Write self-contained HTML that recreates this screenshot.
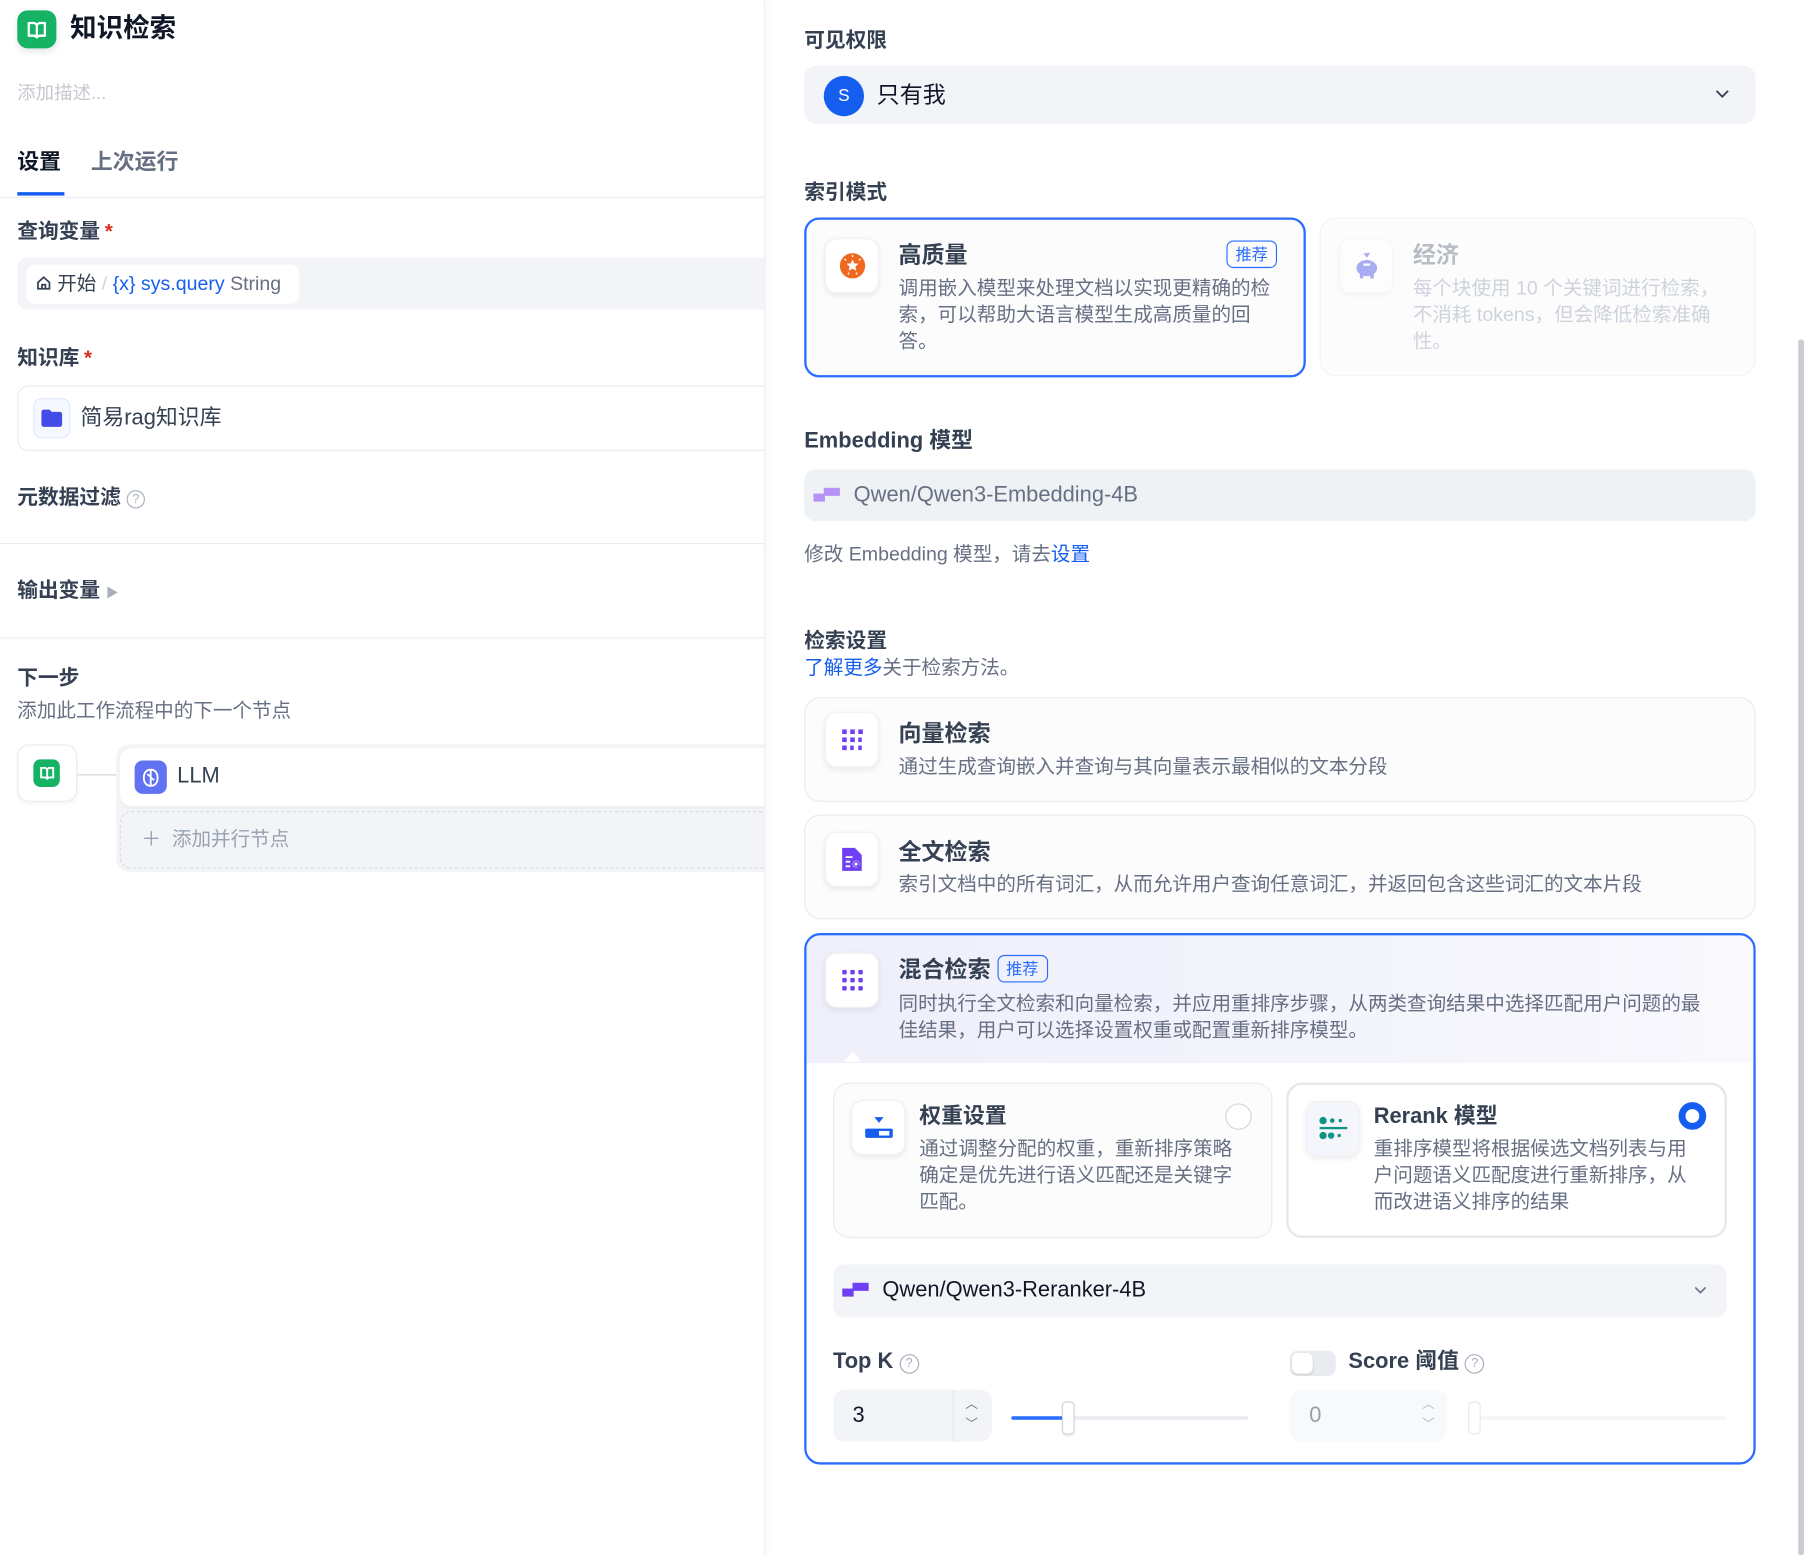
<!DOCTYPE html>
<html><head><meta charset="utf-8">
<style>
*{box-sizing:border-box;margin:0;padding:0}
html,body{width:1804px;height:1555px;overflow:hidden;background:#fff}
body{font-family:"Liberation Sans","Noto Sans CJK SC",sans-serif;color:#354052}
#w{position:absolute;left:0;top:0;width:1568px;height:1352px;transform:scale(1.1505);transform-origin:0 0}
.a{position:absolute;white-space:nowrap}
.b{font-weight:700}
.lbl{font-size:18px;font-weight:700;color:#354052;line-height:24px}
.star{color:#d92d20;margin-left:4px}
.gray{color:#676f83}
.ic{position:absolute;width:47px;height:48px;background:#fff;border-radius:10px;box-shadow:0 2px 5px rgba(16,24,40,.08);border:1px solid #f0f1f4;display:flex;align-items:center;justify-content:center}
.card{position:absolute;background:#fcfcfd;border:1px solid #e8eaef;border-radius:14px}
.ttl{font-size:20px;font-weight:700;color:#354052;line-height:26px}
.desc{font-size:17px;color:#676f83;line-height:23px;white-space:normal}
.badge{display:inline-block;border:1px solid #296dff;color:#296dff;border-radius:6px;font-size:14px;line-height:22px;padding:0 7px;font-weight:400}
.q{display:inline-block;width:16px;height:16px;border:1.3px solid #a8afbd;border-radius:50%;font-size:11px;color:#a8afbd;text-align:center;line-height:14px;font-weight:400;vertical-align:1px}
</style></head><body><div id="w">
<!-- left panel -->
<div class="a" style="left:0;top:0;width:665px;height:1352px;border-right:1px solid #eceef2;box-shadow:2px 0 6px rgba(0,0,0,.03)"></div>
<div class="a" style="left:0;top:0;width:664px;height:1352px;overflow:hidden">
<div class="a" style="left:15px;top:9px;width:34px;height:33px;background:#16b364;border-radius:9px;box-shadow:0 3px 6px rgba(0,0,0,.1);display:flex;align-items:center;justify-content:center">
<svg width="18" height="16" viewBox="0 0 18 16"><path d="M2 2h5l2 1.5L11 2h5v11h-5l-2 1.5L7 13H2z M9 3.5v11" fill="none" stroke="#fff" stroke-width="2" stroke-linejoin="round"/></svg></div>
<div class="a b" style="left:61px;top:9px;font-size:23px;line-height:31px;color:#101828">知识检索</div>
<div class="a" style="left:15px;top:71px;font-size:16px;color:#c4c8d0;line-height:22px">添加描述...</div>
<div class="a b" style="left:15px;top:129px;font-size:19px;color:#101828;line-height:26px">设置</div>
<div class="a b" style="left:79px;top:129px;font-size:19px;color:#676f83;line-height:26px">上次运行</div>
<div class="a" style="left:15px;top:167px;width:41px;height:3px;background:#155eef"></div>
<div class="a" style="left:0;top:171px;width:665px;height:1px;background:#eaecf0"></div>
<div class="a lbl" style="left:15px;top:189px">查询变量<span class="star">*</span></div>
<div class="a" style="left:15px;top:224px;width:660px;height:45px;background:#f2f4f7;border-radius:9px 0 0 9px"></div>
<div class="a" style="left:23px;top:230px;width:237px;height:34px;background:#fff;border-radius:7px;font-size:17px;line-height:34px;padding-left:8px;color:#354052">
<svg width="14" height="14" viewBox="0 0 14 14" style="vertical-align:-1px"><path d="M2 6.5L7 2l5 4.5V12H2z M5.5 12V8.5h3V12" fill="none" stroke="#354052" stroke-width="1.5"/></svg> 开始<span style="color:#d0d5dd"> / </span><span style="color:#155eef">{x} sys.query</span> <span style="color:#676f83">String</span></div>
<div class="a lbl" style="left:15px;top:299px">知识库<span class="star">*</span></div>
<div class="a" style="left:15px;top:335px;width:670px;height:57px;border:1px solid #eaecf0;border-radius:10px"></div>
<div class="a" style="left:29px;top:346px;width:32px;height:35px;background:#f5f8ff;border:1px solid #e0e8fc;border-radius:7px;display:flex;align-items:center;justify-content:center">
<svg width="20" height="17" viewBox="0 0 20 17"><path d="M1 3a2 2 0 012-2h5l2 2h7a2 2 0 012 2v9a2 2 0 01-2 2H3a2 2 0 01-2-2z" fill="#444ce7"/></svg></div>
<div class="a" style="left:70px;top:351px;font-size:19px;line-height:26px;color:#354052">简易rag知识库</div>
<div class="a lbl" style="left:15px;top:420px">元数据过滤 <span class="q">?</span></div>
<div class="a" style="left:0;top:472px;width:665px;height:1px;background:#eaecf0"></div>
<div class="a lbl" style="left:15px;top:501px">输出变量 <span style="color:#a8afbd;font-size:11px">▶</span></div>
<div class="a" style="left:0;top:554px;width:665px;height:1px;background:#eaecf0"></div>
<div class="a lbl" style="left:15px;top:577px">下一步</div>
<div class="a gray" style="left:15px;top:606px;font-size:17px;line-height:24px">添加此工作流程中的下一个节点</div>
<div class="a" style="left:15px;top:647px;width:52px;height:50px;background:#fff;border:1px solid #eaecf0;border-radius:10px;box-shadow:0 1px 3px rgba(0,0,0,.05)"></div>
<div class="a" style="left:29px;top:660px;width:23px;height:24px;background:#16b364;border-radius:6px;display:flex;align-items:center;justify-content:center">
<svg width="14" height="12" viewBox="0 0 18 16"><path d="M2 2h5l2 1.5L11 2h5v11h-5l-2 1.5L7 13H2z M9 3.5v11" fill="none" stroke="#fff" stroke-width="2.2"/></svg></div>
<div class="a" style="left:67px;top:673px;width:34px;height:1px;background:#d0d5dd"></div>
<div class="a" style="left:101px;top:647px;width:580px;height:111px;background:#f2f4f7;border-radius:12px 0 0 12px"></div>
<div class="a" style="left:104px;top:650px;width:580px;height:51px;background:#fff;border-radius:11px 0 0 11px;box-shadow:0 1px 2px rgba(0,0,0,.05)"></div>
<div class="a" style="left:117px;top:661px;width:28px;height:29px;background:#6172f3;border-radius:7px;display:flex;align-items:center;justify-content:center">
<svg width="18" height="18" viewBox="0 0 18 18"><path d="M9 2C5 2 3 5 3 9s2 7 6 7 6-3 6-7-2-7-6-7z M9 2v14 M6 6l3 2 M12 11l-3-2" fill="none" stroke="#fff" stroke-width="1.6"/></svg></div>
<div class="a" style="left:154px;top:662px;font-size:19px;line-height:26px;color:#354052">LLM</div>
<div class="a" style="left:104px;top:705px;width:580px;height:50px;border:1px dashed #d7dbe2;border-radius:10px 0 0 10px"></div>
<div class="a" style="left:123px;top:718px;font-size:17px;line-height:24px;color:#98a2b3">＋&nbsp;&nbsp;添加并行节点</div>
</div>

<!-- right -->
<div class="a lbl" style="left:699px;top:23px">可见权限</div>
<div class="a" style="left:699px;top:57px;width:827px;height:51px;background:#f2f4f7;border-radius:11px"></div>
<div class="a" style="left:716px;top:66px;width:35px;height:35px;border-radius:50%;background:#155eef;color:#fff;font-size:15px;text-align:center;line-height:35px">S</div>
<div class="a" style="left:762px;top:70px;font-size:20px;line-height:27px;color:#101828">只有我</div>
<svg class="a" style="left:1490px;top:77px" width="14" height="10" viewBox="0 0 14 10"><path d="M2 2l5 5 5-5" fill="none" stroke="#354052" stroke-width="1.6"/></svg>
<div class="a lbl" style="left:699px;top:155px">索引模式</div>

<div class="card" style="left:699px;top:189px;width:436px;height:139px;border:2px solid #296dff;border-radius:13px"></div>
<div class="ic" style="left:717px;top:207px"><svg width="24" height="24" viewBox="0 0 24 24"><circle cx="12" cy="12" r="11" fill="#ef6820"/><path d="M12 6.5l1.6 3.4 3.6.4-2.7 2.4.8 3.6L12 14.5l-3.3 1.8.8-3.6-2.7-2.4 3.6-.4z" fill="#fff"/><path d="M12 2.5v2M5 6l1.3 1.3M19 6l-1.3 1.3M8 19.5l1-1.5M16 19.5l-1-1.5" stroke="#fff" stroke-width="1.2"/></svg></div>
<div class="a ttl" style="left:781px;top:209px">高质量</div>
<div class="a badge" style="left:1066px;top:209px">推荐</div>
<div class="a desc" style="left:781px;top:239px;width:335px">调用嵌入模型来处理文档以实现更精确的检索，可以帮助大语言模型生成高质量的回答。</div>

<div class="card" style="left:1147px;top:189px;width:379px;height:138px;border-color:#f2f3f6"></div>
<div style="opacity:.45">
<div class="ic" style="left:1164px;top:207px"><svg width="22" height="26" viewBox="0 0 22 26"><path d="M8 2h6l-3 4z" fill="#444ce7"/><ellipse cx="11" cy="15" rx="9" ry="7" fill="#444ce7"/><rect x="5" y="20" width="3" height="4" fill="#444ce7"/><rect x="14" y="20" width="3" height="4" fill="#444ce7"/><rect x="8" y="11" width="6" height="2" fill="#fff"/></svg></div>
<div class="a ttl" style="left:1228px;top:209px;color:#676f83">经济</div>
<div class="a desc" style="left:1228px;top:239px;width:275px;color:#98a2b3">每个块使用 10 个关键词进行检索，不消耗 tokens，但会降低检索准确性。</div>
</div>

<div class="a lbl" style="left:699px;top:372px;font-size:19px">Embedding 模型</div>
<div class="a" style="left:699px;top:408px;width:827px;height:45px;background:#eff2f5;border-radius:10px"></div>
<svg class="a" style="left:707px;top:423px" width="24" height="14" viewBox="0 0 24 14"><rect x="0" y="6" width="10" height="7" fill="#b692f6"/><rect x="9" y="1" width="14" height="7" fill="#b692f6"/></svg>
<div class="a" style="left:742px;top:418px;font-size:19px;line-height:26px;color:#676f83">Qwen/Qwen3-Embedding-4B</div>
<div class="a gray" style="left:699px;top:470px;font-size:17px;line-height:24px">修改 Embedding 模型，请去<span style="color:#155eef">设置</span></div>

<div class="a lbl" style="left:699px;top:545px">检索设置</div>
<div class="a gray" style="left:699px;top:569px;font-size:17px;line-height:24px"><span style="color:#155eef">了解更多</span>关于检索方法。</div>

<div class="card" style="left:699px;top:606px;width:827px;height:91px"></div>
<div class="ic" style="left:717px;top:619px"><svg width="20" height="20" viewBox="0 0 20 20" fill="#6e3ff3"><rect x="1" y="1" width="4" height="4"/><rect x="8" y="1" width="4" height="4"/><rect x="15" y="1" width="4" height="4"/><rect x="1" y="8" width="4" height="4"/><rect x="8" y="8" width="4" height="4"/><rect x="15" y="8" width="3" height="4"/><rect x="1" y="15" width="4" height="4"/><rect x="8" y="15" width="3" height="4"/><rect x="15" y="15" width="3" height="4"/></svg></div>
<div class="a ttl" style="left:781px;top:625px">向量检索</div>
<div class="a desc" style="left:781px;top:655px">通过生成查询嵌入并查询与其向量表示最相似的文本分段</div>

<div class="card" style="left:699px;top:708px;width:827px;height:91px"></div>
<div class="ic" style="left:717px;top:723px"><svg width="20" height="22" viewBox="0 0 20 22"><path d="M1 1h11l6 6v14H1z" fill="#6e3ff3"/><path d="M4 9h6M4 13h4M4 17h4" stroke="#fff" stroke-width="1.6"/><circle cx="13" cy="15" r="3" fill="#fff"/><circle cx="13" cy="15" r="2" fill="none" stroke="#6e3ff3" stroke-width="1.3"/><path d="M14.5 16.5l3 3" stroke="#6e3ff3" stroke-width="1.5"/></svg></div>
<div class="a ttl" style="left:781px;top:728px">全文检索</div>
<div class="a desc" style="left:781px;top:757px">索引文档中的所有词汇，从而允许用户查询任意词汇，并返回包含这些词汇的文本片段</div>

<div class="a" style="left:699px;top:811px;width:827px;height:462px;border:2px solid #296dff;border-radius:14px;overflow:hidden;background:#fff">
<div style="position:absolute;left:0;top:0;width:100%;height:111px;background:linear-gradient(90deg,#efeffb,#f8f8fd)"></div>
</div>
<div class="a" style="left:733px;top:914px;width:0;height:0;border-left:8px solid transparent;border-right:8px solid transparent;border-bottom:9px solid #fff"></div>
<div class="ic" style="left:717px;top:828px"><svg width="20" height="20" viewBox="0 0 20 20" fill="#6e3ff3"><rect x="1" y="1" width="4" height="4" rx="1.5"/><rect x="8" y="1" width="4" height="4" rx="1.5"/><rect x="15" y="1" width="4" height="4" rx="1.5"/><rect x="1" y="8" width="4" height="4" rx="1.5"/><rect x="8" y="8" width="4" height="4" rx="1.5"/><rect x="15" y="8" width="4" height="4" rx="1.5"/><rect x="1" y="15" width="4" height="4" rx="1.5"/><rect x="8" y="15" width="4" height="4" rx="1.5"/><rect x="15" y="15" width="4" height="4" rx="1.5"/></svg></div>
<div class="a ttl" style="left:781px;top:830px">混合检索 <span class="badge" style="vertical-align:2px">推荐</span></div>
<div class="a desc" style="left:781px;top:861px;width:708px">同时执行全文检索和向量检索，并应用重排序步骤，从两类查询结果中选择匹配用户问题的最佳结果，用户可以选择设置权重或配置重新排序模型。</div>

<div class="card" style="left:724px;top:941px;width:382px;height:135px;border-color:#eaecf0"></div>
<div class="ic" style="left:740px;top:956px"><svg width="26" height="22" viewBox="0 0 26 22"><path d="M9 2h8l-4 5z" fill="#155eef"/><rect x="1" y="12" width="24" height="8" rx="1.5" fill="#155eef"/><rect x="13" y="14" width="9" height="4" fill="#fff"/></svg></div>
<div class="a ttl" style="left:799px;top:958px;font-size:19px">权重设置</div>
<div class="a" style="left:1065px;top:959px;width:23px;height:23px;border:1.5px solid #d0d5dd;border-radius:50%;background:#fff"></div>
<div class="a desc" style="left:799px;top:987px;width:280px">通过调整分配的权重，重新排序策略确定是优先进行语义匹配还是关键字匹配。</div>

<div class="card" style="left:1118px;top:941px;width:383px;height:135px;background:#fff;border:2px solid #e4e7ec"></div>
<div class="ic" style="left:1135px;top:957px;background:#f5f6fb"><svg width="26" height="24" viewBox="0 0 26 24" fill="#0e9384"><circle cx="4" cy="5" r="3.2"/><circle cx="12" cy="5" r="2"/><circle cx="19" cy="5" r="1.5"/><rect x="1" y="10.5" width="24" height="2"/><circle cx="4" cy="18" r="3.2"/><circle cx="11" cy="18" r="2.8"/><circle cx="18" cy="18" r="1.5"/></svg></div>
<div class="a ttl" style="left:1194px;top:958px;font-size:19px">Rerank 模型</div>
<div class="a" style="left:1459px;top:958px;width:24px;height:24px;border:6px solid #155eef;border-radius:50%;background:#fff"></div>
<div class="a desc" style="left:1194px;top:987px;width:280px">重排序模型将根据候选文档列表与用户问题语义匹配度进行重新排序，从而改进语义排序的结果</div>

<div class="a" style="left:724px;top:1099px;width:777px;height:46px;background:#f2f4f7;border-radius:10px"></div>
<svg class="a" style="left:732px;top:1114px" width="24" height="14" viewBox="0 0 24 14"><rect x="0" y="6" width="10" height="7" fill="#6e3ff3"/><rect x="9" y="1" width="14" height="7" fill="#6e3ff3"/></svg>
<div class="a" style="left:767px;top:1109px;font-size:19px;line-height:26px;color:#101828">Qwen/Qwen3-Reranker-4B</div>
<svg class="a" style="left:1472px;top:1117px" width="12" height="9" viewBox="0 0 12 9"><path d="M1.5 2l4.5 4.5L10.5 2" fill="none" stroke="#676f83" stroke-width="1.4"/></svg>

<div class="a lbl" style="left:724px;top:1172px;font-size:19px">Top K <span class="q" style="width:17px;height:17px">?</span></div>
<div class="a" style="left:1121px;top:1174px;width:40px;height:22px;background:#e9ebf0;border-radius:7px"></div>
<div class="a" style="left:1123px;top:1176px;width:18px;height:18px;background:#fff;border-radius:5px;box-shadow:0 1px 2px rgba(0,0,0,.15)"></div>
<div class="a lbl" style="left:1172px;top:1172px;font-size:19px">Score 阈值 <span class="q" style="width:17px;height:17px">?</span></div>

<div class="a" style="left:724px;top:1208px;width:138px;height:45px;background:#f2f4f7;border-radius:10px"></div>
<div class="a" style="left:828px;top:1208px;width:1px;height:45px;background:#e4e7ec"></div>
<div class="a" style="left:741px;top:1218px;font-size:19px;line-height:26px;color:#101828">3</div>
<div class="a" style="left:839px;top:1213px;font-size:11px;line-height:17px;color:#676f83">︿<br>﹀</div>
<div class="a" style="left:879px;top:1231px;width:206px;height:3px;background:#eaecf0;border-radius:2px"></div>
<div class="a" style="left:879px;top:1231px;width:47px;height:3px;background:#296dff;border-radius:2px"></div>
<div class="a" style="left:923px;top:1218px;width:11px;height:29px;background:#fff;border:1px solid #d0d5dd;border-radius:4px;box-shadow:0 1px 2px rgba(0,0,0,.1)"></div>

<div style="opacity:.5">
<div class="a" style="left:1121px;top:1208px;width:137px;height:45px;background:#f2f4f7;border-radius:10px"></div>
<div class="a" style="left:1138px;top:1218px;font-size:19px;line-height:26px;color:#354052">0</div>
<div class="a" style="left:1236px;top:1213px;font-size:11px;line-height:17px;color:#676f83">︿<br>﹀</div>
<div class="a" style="left:1276px;top:1231px;width:225px;height:3px;background:#eaecf0"></div>
<div class="a" style="left:1276px;top:1218px;width:11px;height:29px;background:#fff;border:1px solid #d0d5dd;border-radius:4px"></div>
</div>

<div class="a" style="left:1563px;top:295px;width:5px;height:1057px;background:#c9ccd2;border-radius:3px"></div>
</div></body></html>
